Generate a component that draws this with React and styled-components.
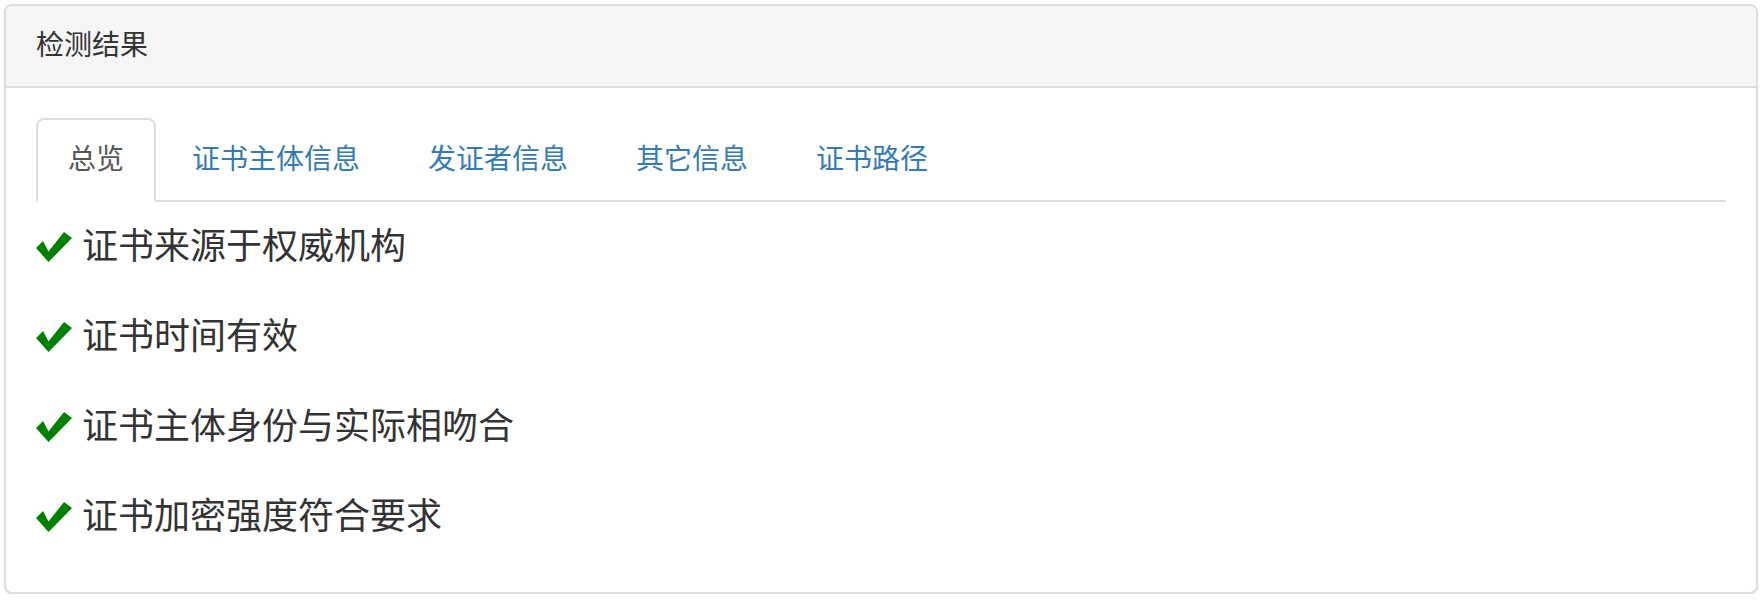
import React from 'react';
import styled, { createGlobalStyle } from 'styled-components';

const GlobalStyle = createGlobalStyle`
  html, body {
    margin: 0;
    padding: 0;
    background: #fff;
  }
  body {
    font-family: "Liberation Sans", "Noto Sans CJK SC", sans-serif;
    color: #333;
  }
`

const Panel = styled.div`
  margin: 4px 6px 0 4px;
  border: 2px solid #ddd;
  border-radius: 8px;
  background: #fff;
  box-shadow: 0 2px 2px rgba(0, 0, 0, 0.05);
  overflow: hidden;
`

const PanelHeading = styled.div`
  background: #f5f5f5;
  border-bottom: 2px solid #ddd;
  padding: 20px 30px;
  font-size: 28px;
  line-height: 40px;
  color: #333;
`

const PanelBody = styled.div`
  padding: 30px;
`

const Tabs = styled.ul`
  display: flex;
  margin: 0;
  padding: 0;
  list-style: none;
  border-bottom: 2px solid #ddd;
`

const Tab = styled.li`
  margin: 0 4px -2px 0;
  padding: 20px 30px;
  font-size: 28px;
  line-height: 40px;
  border: 2px solid ${p => (p.active ? '#ddd' : 'transparent')};
  border-bottom-color: transparent;
  border-radius: 8px 8px 0 0;
  background: ${p => (p.active ? '#fff' : 'transparent')};
  color: ${p => (p.active ? '#555' : '#337ab7')};
  cursor: ${p => (p.active ? 'default' : 'pointer')};
`

const ResultList = styled.div`
  display: flex;
  flex-direction: column;
  gap: 40px;
  padding: 20px 0;
`

const ResultItem = styled.div`
  display: flex;
  align-items: center;
  font-size: 36px;
  line-height: 50px;
  color: #333;

  svg {
    flex: none;
    margin-right: 10px;
  }
`

function CheckIcon() {
  return (
    <svg width="36" height="30" viewBox="0 0 36 30">
      <polygon points="0,16 7,9 12.5,19.5 28,0 36,6 12.5,30" fill="#008000" />
    </svg>
  )
}

const tabs = ['总览', '证书主体信息', '发证者信息', '其它信息', '证书路径']

const results = [
  '证书来源于权威机构',
  '证书时间有效',
  '证书主体身份与实际相吻合',
  '证书加密强度符合要求',
]

export default function App() {
  return (
    <>
      <GlobalStyle />
      <Panel>
        <PanelHeading>检测结果</PanelHeading>
        <PanelBody>
          <Tabs>
            {tabs.map((t, i) => (
              <Tab key={t} active={i === 0}>{t}</Tab>
            ))}
          </Tabs>
          <ResultList>
            {results.map(r => (
              <ResultItem key={r}>
                <CheckIcon />
                {r}
              </ResultItem>
            ))}
          </ResultList>
        </PanelBody>
      </Panel>
    </>
  )
}
